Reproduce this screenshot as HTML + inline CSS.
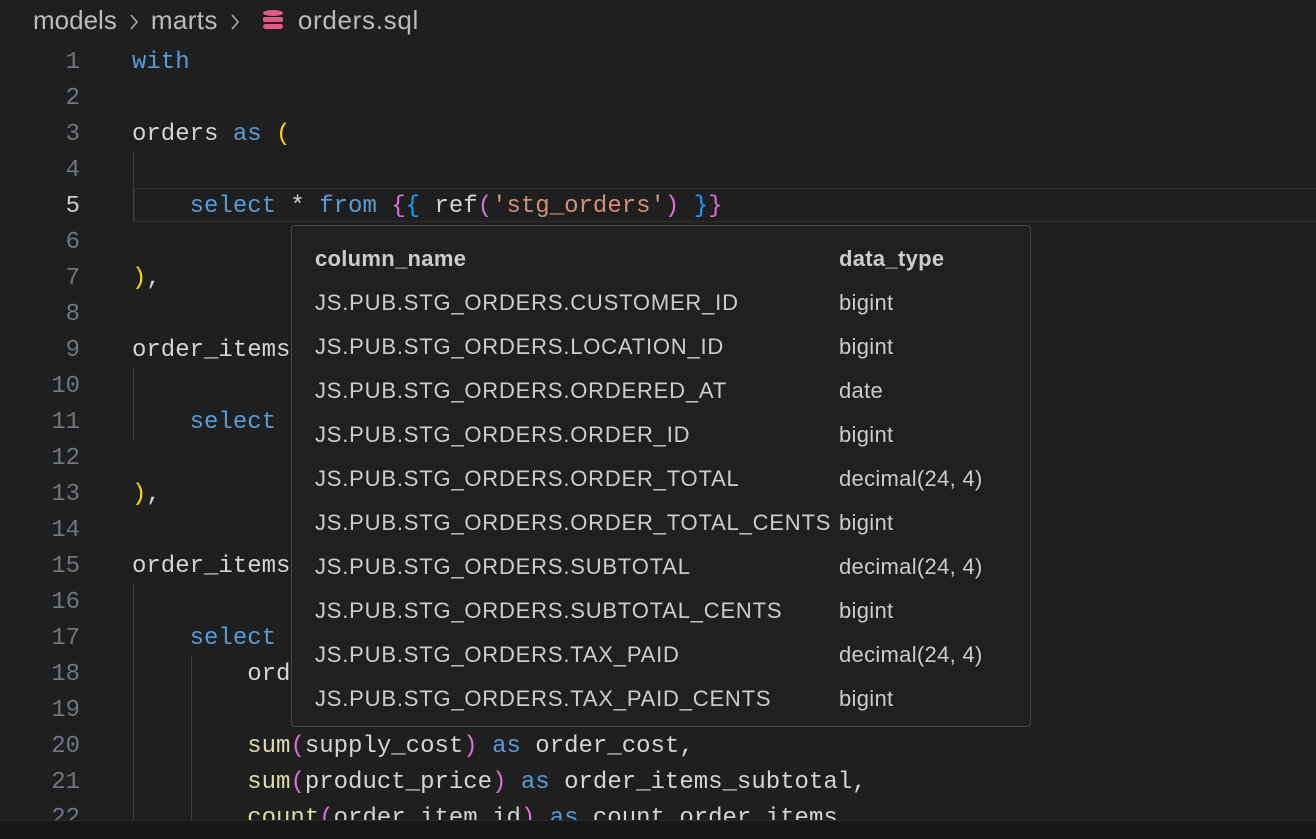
<!DOCTYPE html>
<html><head><meta charset="utf-8"><style>
body{margin:0;width:1316px;height:838px;background:#1f1f1f;overflow:hidden;position:relative;font-family:"Liberation Mono",monospace}
.bc{position:absolute;top:5px;left:33px;font:26px "Liberation Sans",sans-serif;color:#bbbbbb;white-space:nowrap}
.bc svg.c{vertical-align:-2px;margin:0 12px}
.ln{position:absolute;left:0;width:80px;text-align:right;color:#6e7681;font-size:24px;line-height:36px}
.cd{position:absolute;left:132px;color:#d4d4d4;font-size:24px;line-height:36px;white-space:pre}
.k{color:#569cd6}.y{color:#ffd700}.p{color:#da70d6}.b{color:#179fff}.s{color:#ce9178}.f{color:#dcdcaa}
.g{position:absolute;width:1px;background:#404040}
.tt{position:absolute;left:291px;top:225px;width:738px;height:500px;background:#202020;border:1px solid #454545;border-radius:4px;font:22px "Liberation Sans",sans-serif;color:#cccccc}
.tt div{position:absolute;left:23px;white-space:nowrap;letter-spacing:0.8px}
.tt div span{position:absolute;left:524px;letter-spacing:0.3px}
</style></head><body>
<div class="bc">models<svg class="c" width="10" height="18" viewBox="0 0 10 18"><path d="M2 2l6 7-6 7" stroke="#aaa" stroke-width="1.6" fill="none"/></svg><span style="letter-spacing:0.4px">marts</span><svg class="c" width="10" height="18" viewBox="0 0 10 18" style="margin-right:22px"><path d="M2 2l6 7-6 7" stroke="#aaa" stroke-width="1.6" fill="none"/></svg><svg width="22" height="22" viewBox="0 0 22 22" style="vertical-align:-2px;margin:0 14px 0 0"><ellipse cx="11" cy="4" rx="10" ry="3" fill="#e05c83"/><rect x="1" y="8" width="20" height="5" rx="2" fill="#e05c83"/><rect x="1" y="15" width="20" height="5" rx="2.5" fill="#e05c83"/></svg><span style="letter-spacing:0.7px">orders.sql</span></div>
<div style="position:absolute;left:134px;top:188px;width:1182px;height:32px;border:1px solid #2e2e2e;border-right:none"></div>
<div class="g" style="left:133px;top:152px;height:70px"></div>
<div class="g" style="left:133px;top:368px;height:72px"></div>
<div class="g" style="left:133px;top:584px;height:240px"></div>
<div class="g" style="left:191px;top:656px;height:168px"></div>
<div class="ln" style="top:45px">1<br>2<br>3<br>4<br><span style="color:#ccc">5</span><br>6<br>7<br>8<br>9<br>10<br>11<br>12<br>13<br>14<br>15<br>16<br>17<br>18<br>19<br>20<br>21<br>22</div>
<div class="cd" style="top:45px"><span class="k">with</span>

orders <span class="k">as</span> <span class="y">(</span>

    <span class="k">select</span> * <span class="k">from</span> <span class="p">{</span><span class="b">{</span> ref<span class="p">(</span><span class="s">'stg_orders'</span><span class="p">)</span> <span class="b">}</span><span class="p">}</span>

<span class="y">)</span>,

order_items

    <span class="k">select</span>

<span class="y">)</span>,

order_items

    <span class="k">select</span>
        ord

        <span class="f">sum</span><span class="p">(</span>supply_cost<span class="p">)</span> <span class="k">as</span> order_cost,
        <span class="f">sum</span><span class="p">(</span>product_price<span class="p">)</span> <span class="k">as</span> order_items_subtotal,
        <span class="f">count</span><span class="p">(</span>order_item_id<span class="p">)</span> <span class="k">as</span> count_order_items,</div>
<div style="position:absolute;left:0;top:820px;width:1316px;height:18px;background:#181818;border-top:1px solid #2b2b2b"></div>
<div class="tt">
<div style="top:20px;font-weight:bold;letter-spacing:0.3px">column_name<span>data_type</span></div>
<div style="top:64px">JS.PUB.STG_ORDERS.CUSTOMER_ID<span>bigint</span></div>
<div style="top:108px">JS.PUB.STG_ORDERS.LOCATION_ID<span>bigint</span></div>
<div style="top:152px">JS.PUB.STG_ORDERS.ORDERED_AT<span>date</span></div>
<div style="top:196px">JS.PUB.STG_ORDERS.ORDER_ID<span>bigint</span></div>
<div style="top:240px">JS.PUB.STG_ORDERS.ORDER_TOTAL<span>decimal(24, 4)</span></div>
<div style="top:284px">JS.PUB.STG_ORDERS.ORDER_TOTAL_CENTS<span>bigint</span></div>
<div style="top:328px">JS.PUB.STG_ORDERS.SUBTOTAL<span>decimal(24, 4)</span></div>
<div style="top:372px">JS.PUB.STG_ORDERS.SUBTOTAL_CENTS<span>bigint</span></div>
<div style="top:416px">JS.PUB.STG_ORDERS.TAX_PAID<span>decimal(24, 4)</span></div>
<div style="top:460px">JS.PUB.STG_ORDERS.TAX_PAID_CENTS<span>bigint</span></div>
</div>
</body></html>
